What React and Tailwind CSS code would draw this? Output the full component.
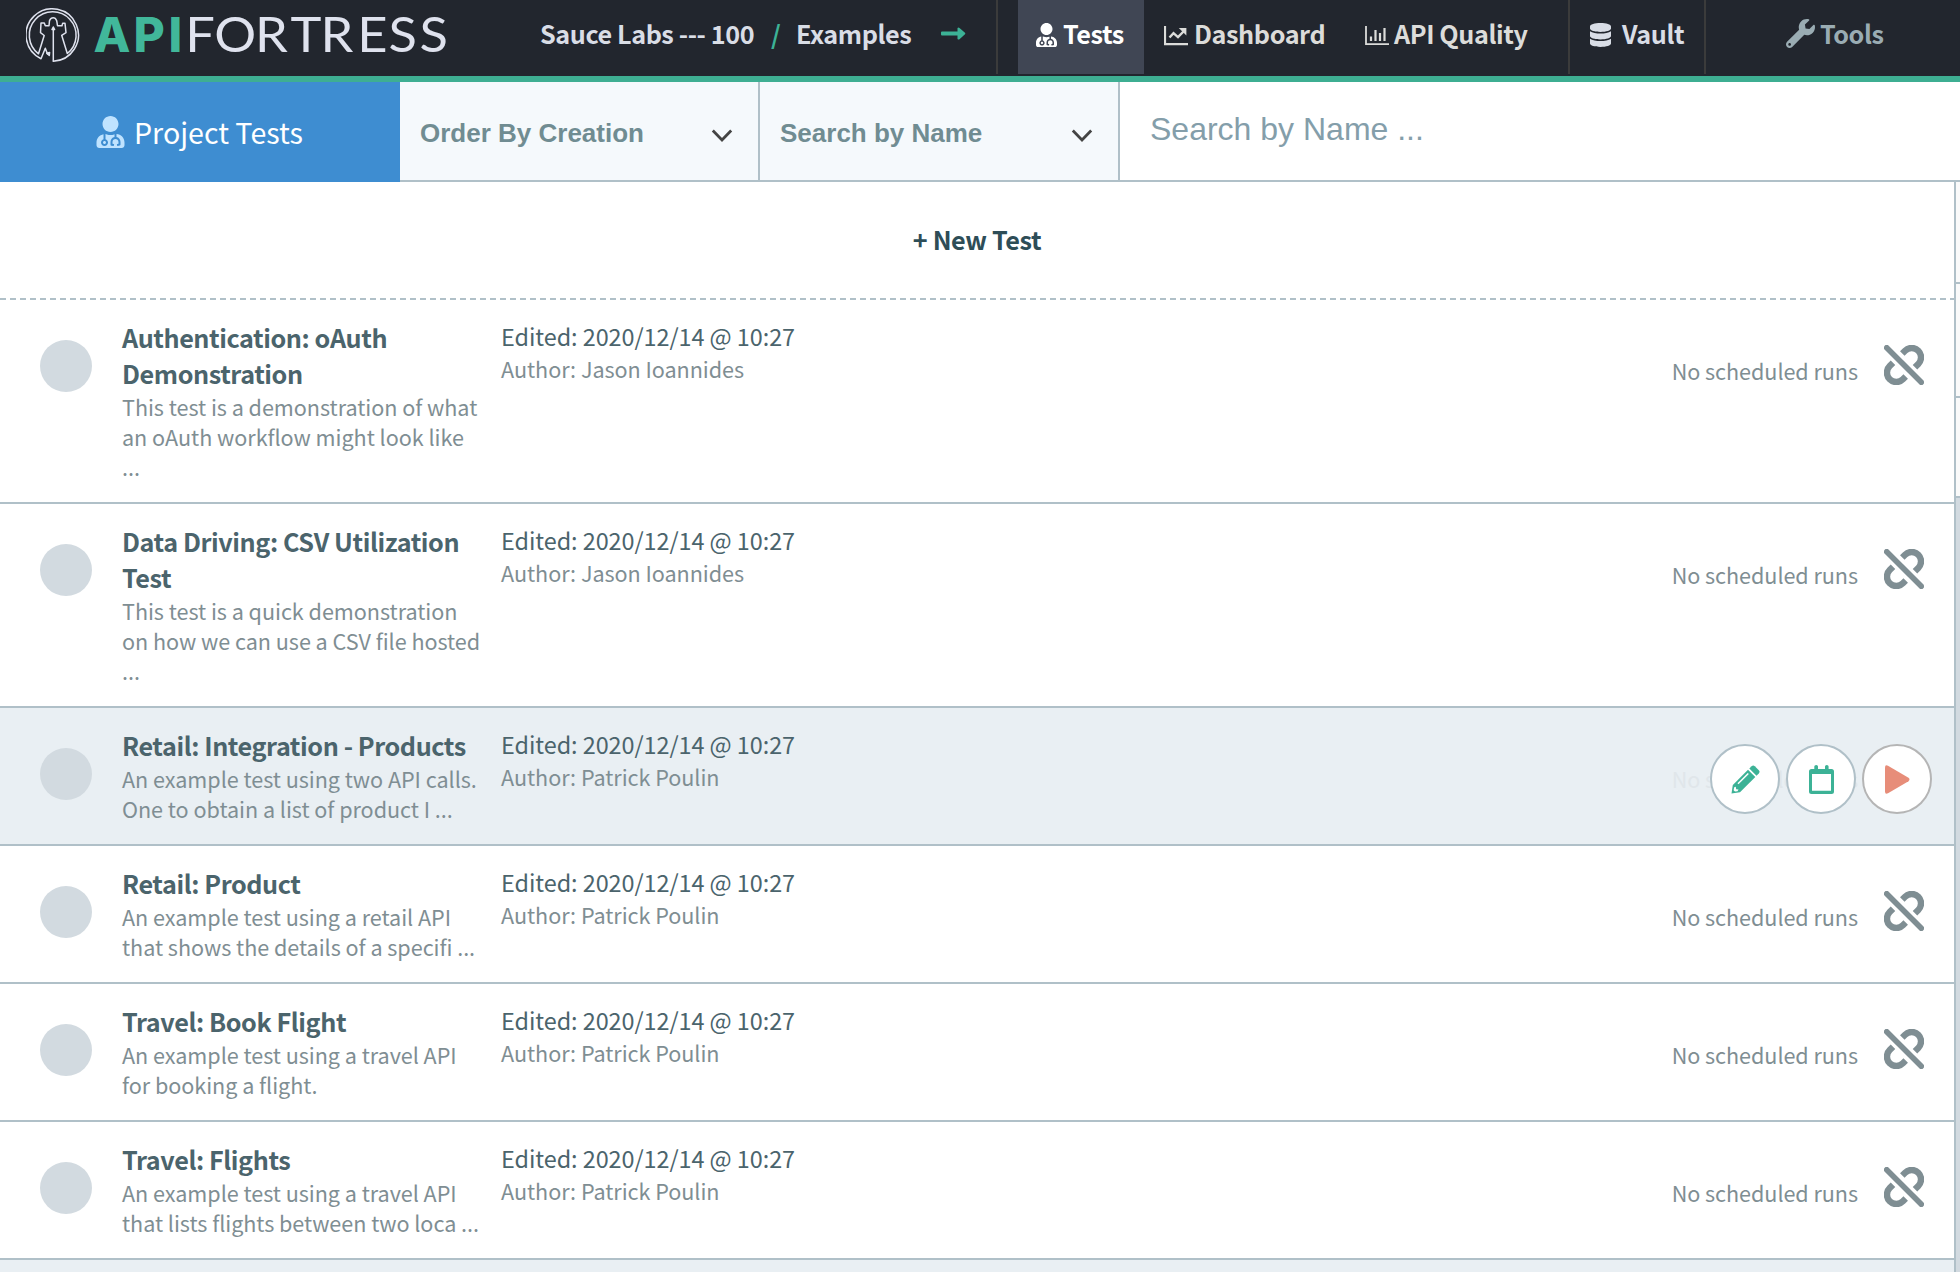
import React from "react";
import { FaUserMd, FaDatabase, FaWrench } from "react-icons/fa";

function LogoMark() {
  return (
    <svg className="h-[54px] w-[54px] shrink-0" viewBox="0 0 54 54" fill="none" stroke="#dfe2ee" strokeWidth="1.5" strokeLinejoin="round" strokeLinecap="round">
      <path d="M27.300 53.200A26.200 26.200 0 1 0 15 50.700L19.300 40.300L21.500 46" />
      <path d="M12.500 45.800A23.400 23.400 0 1 1 41.300 45.500L35.700 27.300L40 24.700L39 15.300H36.700L36 17.700H31.500L30.700 12.700Q29.500 9.800 27.200 9.800T23.500 12.700L23 17.700H19.300L18.300 15H15L14.500 24.700L18.200 27.500L12.500 45.800" />
      <path d="M27.300 53V21" />
      <path d="M26 21.500L27.300 19L28.600 21.500ZM20.800 45.200L23.600 44.500L23.300 47.500Z" fill="#dfe2ee" />
    </svg>
  );
}

function Logo() {
  return (
    <div className="flex h-[76px] w-[514px] items-start pl-[26px]">
      <div className="pt-2"><LogoMark /></div>
      <svg className="ml-[14px] h-[76px] w-[400px]" viewBox="0 0 400 76">
        <text x="-0.500 39.500 74.500" y="52.200" className="fill-[#41b79a] font-['Inter'] text-[48px] font-extrabold">API</text>
        <text transform="scale(1.08 1)" x="84.600 111.300 149 181.900 209.700 243.700 272.700 301.500" y="52.300" className="fill-[#dfe2ee] font-['Lato'] text-[48.500px] font-normal">FORTRESS</text>
      </svg>
    </div>
  );
}

function ChartLine() {
  return (
    <svg className="h-[20px] w-[24px]" viewBox="0 0 24 20" fill="none" stroke="currentColor">
      <path d="M1 0V18.200H24" strokeWidth="2.200" />
      <path d="M5.500 11.500L9.500 7.200L14 11.200L20 5" strokeWidth="2.400" />
      <path d="M14.800 2H22.400V9.500Z" fill="currentColor" stroke="none" />
    </svg>
  );
}

function ChartBars() {
  return (
    <svg className="h-[20px] w-[24px]" viewBox="0 0 24 20" fill="none" stroke="currentColor">
      <path d="M1 0V18.200H24" strokeWidth="1.800" />
      <path d="M6 15V10.500M10.500 15V4M15 15V7M19.500 15V2" strokeWidth="2.200" />
    </svg>
  );
}

function Arrow() {
  return (
    <svg className="h-[13px] w-[25px]" viewBox="0 0 25 13" fill="#3cb296">
      <path d="M1 4.500H16.500V1Q17.500 0 18.500 1L24 5.700Q24.700 6.500 24 7.300L18.500 12.200Q17.500 13 16.500 12V8.500H1Q0 8.500 0 7.500V5.500Q0 4.500 1 4.500Z" />
    </svg>
  );
}

function Chevron() {
  return (
    <svg className="h-[14px] w-[22px]" viewBox="0 0 22 14" fill="none" stroke="#444" strokeWidth="2.800">
      <path d="M1.800 1.500L11 11L20.200 1.500" />
    </svg>
  );
}

function Unlink() {
  return (
    <svg className="h-10 w-10" viewBox="0 0 40 40" fill="none" stroke="#7f8e93">
      <path d="M18.300 8.500L21.100 5.700A9.200 9.200 0 0 1 34.300 18.900L31 22.200" strokeWidth="6.400" />
      <path d="M21.700 31.500L18.900 34.300A9.200 9.200 0 0 1 5.700 21.100L9 17.800" strokeWidth="6.400" />
      <path d="M2.700 2.700L37.300 37.300" strokeWidth="5.600" strokeLinecap="round" />
    </svg>
  );
}

function Pencil() {
  return (
    <svg className="h-[29px] w-[29px]" viewBox="0 0 29 29">
      <path d="M0.500 28.500L1.800 20L17 4.800L24.300 12L9 27.200Z" fill="#3cb296" />
      <path d="M18.300 3.500L20.600 1.200Q22.200 -0.300 23.800 1.200L27.800 5.200Q29.300 6.800 27.800 8.400L25.500 10.700Z" fill="#3cb296" />
      <path d="M7 18.800L17.300 8.500" stroke="#fff" strokeWidth="1.500" />
      <path d="M3.200 22.200L4.800 21.800L5.200 24.200L7.500 24.600L6.500 26.200L4 26.600L2.600 25.200Z" fill="#fff" />
    </svg>
  );
}

function Calendar() {
  return (
    <svg className="h-[29px] w-[25px]" viewBox="0 0 25 29" fill="#3cb296">
      <path fillRule="evenodd" d="M2.500 4H5.300V1.500Q5.300 0 7.200 0T9 1.500V4H16V1.500Q16 0 17.800 0T19.600 1.500V4H22.500Q25 4 25 6.500V26.500Q25 29 22.500 29H2.500Q0 29 0 26.500V6.500Q0 4 2.500 4ZM3 9V25.800H22V9Z" />
    </svg>
  );
}

function Play() {
  return (
    <svg className="ml-[1px] h-[29px] w-[25px]" viewBox="0 0 25 29" fill="#e78d79">
      <path d="M0 2.500Q0 -0.800 3 0.700L23.500 12.800Q25.500 14.500 23.500 16.200L3 28.300Q0 29.800 0 26.500Z" />
    </svg>
  );
}

function Round({ gray, children }) {
  return (
    <div className={"flex h-[70px] w-[70px] items-center justify-center rounded-full border-2 bg-white " + (gray ? "border-[#b5b5b5]" : "border-[#b0c0c8]")}>
      {children}
    </div>
  );
}

const rows = [
  { title: ["Authentication: oAuth", "Demonstration"], desc: ["This test is a demonstration of what", "an oAuth workflow might look like", "..."], author: "Jason Ioannides" },
  { title: ["Data Driving: CSV Utilization", "Test"], desc: ["This test is a quick demonstration", "on how we can use a CSV file hosted", "..."], author: "Jason Ioannides" },
  { title: ["Retail: Integration - Products"], desc: ["An example test using two API calls.", "One to obtain a list of product I ..."], author: "Patrick Poulin", active: true },
  { title: ["Retail: Product"], desc: ["An example test using a retail API", "that shows the details of a specifi ..."], author: "Patrick Poulin" },
  { title: ["Travel: Book Flight"], desc: ["An example test using a travel API", "for booking a flight."], author: "Patrick Poulin" },
  { title: ["Travel: Flights"], desc: ["An example test using a travel API", "that lists flights between two loca ..."], author: "Patrick Poulin" },
];

function Row({ row }) {
  return (
    <div className={"relative flex border-b-2 border-[#b0c0c8] whitespace-nowrap " + (row.desc.length === 3 ? "h-[204px] " : "h-[138px] ") + (row.active ? "bg-[#e9eff3]" : "bg-white")}>
      <div className="mt-10 ml-10 h-[52px] w-[52px] shrink-0 rounded-full bg-[#d2dae0]" />
      <div className="mt-[19px] ml-[30px] w-[379px]">
        {row.title.map((t) => (
          <div key={t} className="text-[25.2px] leading-[36px] font-bold tracking-[-0.42px] text-[#4b646c]">{t}</div>
        ))}
        <div className="mt-px">
          {row.desc.map((t) => (
            <div key={t} className="text-[21.6px] leading-[30px] tracking-[-0.04px] text-[#7f8e93]">{t}</div>
          ))}
        </div>
      </div>
      <div className="mt-[19px]">
        <div className="text-[23.4px] leading-[34px] tracking-[-0.05px] text-[#4b646c]">Edited: 2020/12/14 @ 10:27</div>
        <div className="text-[21.6px] leading-[32px] tracking-[-0.05px] text-[#7f8e93]">Author: {row.author}</div>
      </div>
      <div className={"mt-[55px] mr-[26px] ml-auto text-[21.6px] leading-[32px] tracking-[-0.06px] " + (row.active ? "text-[#e0e6ea]" : "text-[#7f8e93]")}>No scheduled runs</div>
      <div className="mt-[45px] mr-[30px] h-10 w-10">{!row.active && <Unlink />}</div>
      {row.active && (
        <div className="absolute top-[36px] right-[22px] flex gap-[6px]">
          <Round><Pencil /></Round>
          <Round><Calendar /></Round>
          <Round gray><Play /></Round>
        </div>
      )}
    </div>
  );
}

function Select({ label }) {
  return (
    <div className="flex w-[360px] items-center justify-between border-r-2 border-b-2 border-[#b0c0c8] bg-[#f5f9fc] pr-[25px] pl-5">
      <span className="pt-[5px] font-['Liberation_Sans'] text-[26px] font-bold text-[#708c92]">{label}</span>
      <span className="pt-[9px]"><Chevron /></span>
    </div>
  );
}

export default function App() {
  return (
    <div className="flex h-[1272px] w-[1960px] flex-col overflow-hidden bg-[#e9eff3] font-['Noto_Sans_CJK_SC',sans-serif]">
      <header className="flex h-[82px] shrink-0 items-start border-b-[6px] border-[#3eae92] bg-[#22262e] text-[25.200px] leading-[36px] font-bold tracking-[-0.41px] whitespace-nowrap text-[#d9dde6]">
        <Logo />
        <div className="flex h-[74px] w-[484px] border-r-2 border-[#3b3b3b] pt-[15px] pl-[26px]">
          <span className="w-[231px]">Sauce Labs --- 100</span>
          <span className="w-[25px] text-[#3cb296]">/</span>
          <span className="w-[145px]">Examples</span>
          <span className="pt-[12px]"><Arrow /></span>
        </div>
        <div className="ml-5 flex h-[74px] w-[126px] bg-[#404654] pt-[15px] pl-[18px] text-white">
          <FaUserMd className="mt-[8px] mr-[6px] h-6 w-[21px]" />
          <span>Tests</span>
        </div>
        <div className="flex w-[200px] pt-[15px] pl-[20px] text-[#dcdcda]">
          <span className="mt-[11px] mr-[6px]"><ChartLine /></span>
          <span>Dashboard</span>
        </div>
        <div className="flex h-[74px] w-[226px] border-r-2 border-[#3b3b3b] pt-[15px] pl-[21px] text-[#dcdcda]">
          <span className="mt-[11px] mr-[5px]"><ChartBars /></span>
          <span>API Quality</span>
        </div>
        <div className="flex h-[74px] w-[136px] border-r-2 border-[#3b3b3b] pt-[15px] pl-5">
          <FaDatabase className="mt-[8px] mr-[11px] h-6 w-[21px]" />
          <span>Vault</span>
        </div>
        <div className="flex pt-[15px] pl-[80px] text-[#9aacb3]">
          <FaWrench className="mt-[4px] mr-[5px] h-[29px] w-[29px]" />
          <span>Tools</span>
        </div>
      </header>

      <div className="flex h-[100px] shrink-0 whitespace-nowrap">
        <div className="flex w-[400px] bg-[#3e8dd1] pt-[31px] pl-[96px] text-[28.6px] leading-[40px] text-white">
          <FaUserMd className="mt-[3px] mr-[9px] h-8 w-[29px] text-[#bfe3ff]" />
          <span className="-mt-px">Project Tests</span>
        </div>
        <Select label="Order By Creation" />
        <Select label="Search by Name" />
        <div className="grow border-b-2 border-[#b0c0c8] bg-white pt-[29px] pl-[30px] font-['Liberation_Sans'] text-[32px] leading-[36px] text-[#849eaa]">Search by Name ...</div>
      </div>

      <div className="flex grow">
        <main className="w-[1956px] border-r-2 border-[#b0c0c8]">
          <div className="flex h-[118px] flex-col bg-white">
            <div className="flex grow items-center justify-center text-[25.200px] font-bold tracking-[-0.39px] text-[#2e4d57]">+ New Test</div>
            <div className="h-[2px] bg-[repeating-linear-gradient(90deg,#b0c0c8_0_6px,transparent_6px_10px)]" />
          </div>
          {rows.map((row, i) => <Row key={i} row={row} />)}
        </main>
        <aside className="flex grow flex-col bg-[#d2dae0]">
          <div className="h-[102px] border-b-2 border-[#b0c0c8] bg-[#fafafa]" />
          <div className="h-[114px] border-b-2 border-[#b0c0c8] bg-[#fafafa]" />
          <div className="h-[100px] border-b-2 border-[#b0c0c8] bg-[#fafafa]" />
        </aside>
      </div>
    </div>
  );
}
